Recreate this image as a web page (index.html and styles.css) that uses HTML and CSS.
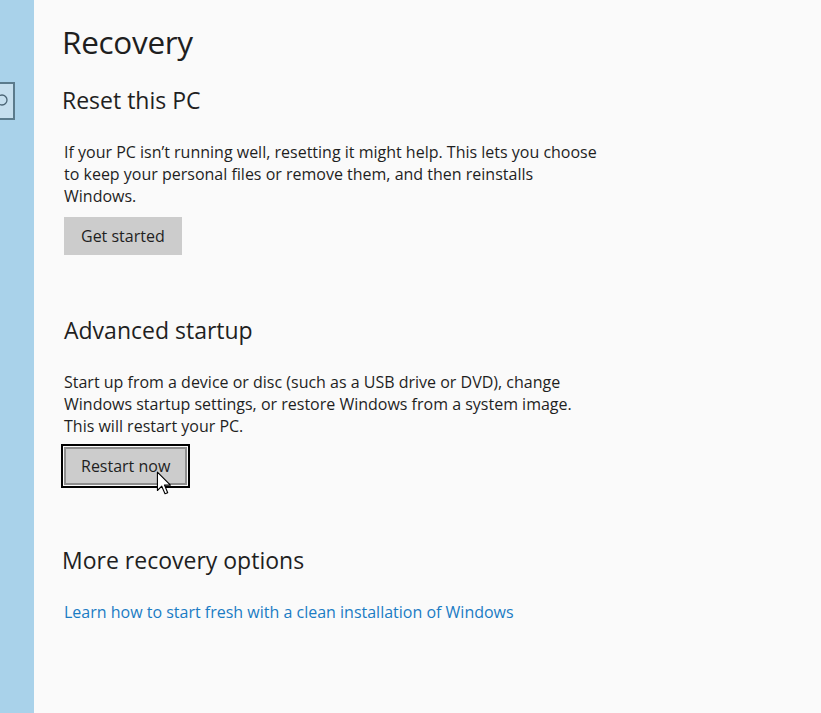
FILE: index.html
```html
<!DOCTYPE html>
<html lang="en">
<head>
    <meta charset="UTF-8">
    <title>Recovery</title>
    <link rel="stylesheet" href="styles.css">
</head>
<body>
    <div class="window">
        <div class="sidebar">
            <div class="search-box">
                <svg class="search-icon" width="16" height="16" viewBox="0 0 16 16">
                    <circle cx="9" cy="7" r="5" fill="none" stroke="#4a6474" stroke-width="1.3"/>
                    <line x1="5.5" y1="10.5" x2="1" y2="15" stroke="#4a6474" stroke-width="1.3"/>
                </svg>
            </div>
        </div>
        <div class="content">
            <h1 class="page-title">Recovery</h1>

            <section class="section">
                <h2 class="section-title">Reset this PC</h2>
                <p class="section-text">If your PC isn’t running well, resetting it might help. This lets you choose<br>to keep your personal files or remove them, and then reinstalls<br>Windows.</p>
                <button class="btn">Get started</button>
            </section>

            <section class="section">
                <h2 class="section-title indent">Advanced startup</h2>
                <p class="section-text">Start up from a device or disc (such as a USB drive or DVD), change<br>Windows startup settings, or restore Windows from a system image.<br>This will restart your PC.</p>
                <div class="btn-wrap">
                    <button class="btn btn-focus">Restart now</button>
                    <!-- mouse pointer hovering the button -->
                    <svg class="pointer" width="18" height="26" viewBox="0 0 16 24">
                        <path d="M1 1 L1 18 L5 14 L8 21 L10.5 20 L7.5 13 L13 13 Z" fill="#fff" stroke="#000" stroke-width="1" stroke-linejoin="round"/>
                    </svg>
                </div>
            </section>

            <section class="section">
                <h2 class="section-title">More recovery options</h2>
                <a class="link" href="#">Learn how to start fresh with a clean installation of Windows</a>
            </section>
        </div>
    </div>
</body>
</html>
```

FILE: styles.css
```css
/* Base */
* {
    box-sizing: border-box;
    margin: 0;
    padding: 0;
}
body {
    font-family: 'Open Sans', 'Noto Sans', sans-serif;
    background: #fafafa;
    color: #1f1f1f;
    width: 821px;
    height: 713px;
    overflow: hidden;
}
.window {
    display: flex;
    height: 713px;
}
/* Sidebar strip */
.sidebar {
    width: 34px;
    flex-shrink: 0;
    background: #a9d2ea;
    position: relative;
    overflow: hidden;
}
.search-box {
    position: absolute;
    left: -20px;
    top: 82px;
    width: 35px;
    height: 38px;
    border: 2px solid #5b7b8c;
    background: #c6dfee;
}
.search-icon {
    position: absolute;
    right: 4px;
    top: 9px;
}
/* Content */
.content {
    flex: 1;
    padding: 22px 0 0 28px;
}
.page-title {
    font-size: 31.5px;
    font-weight: 400;
    line-height: 40px;
    letter-spacing: -0.3px;
    margin-bottom: 23px;
}
.section-title {
    font-size: 23px;
    font-weight: 400;
    line-height: 30px;
    margin-bottom: 26px;
}
.section-title.indent {
    margin-left: 2px;
}
.section-text {
    font-size: 16px;
    line-height: 22px;
    margin-left: 2px;
    margin-bottom: 10px;
}
.btn {
    font-family: inherit;
    font-size: 16px;
    color: #1f1f1f;
    background: #cccccc;
    border: 2px solid #cccccc;
    height: 38px;
    padding: 0 15px;
    margin-left: 2px;
    margin-bottom: 60px;
    cursor: default;
}
.btn-wrap {
    position: relative;
    display: inline-block;
}
.btn-focus {
    border-color: #8e8e8e;
    outline: 2px solid #000;
    outline-offset: 1px;
}
.pointer {
    position: absolute;
    left: 94px;
    top: 24px;
}
.link {
    font-size: 16px;
    line-height: 22px;
    color: #1b7cc4;
    text-decoration: none;
    margin-left: 2px;
}
```
